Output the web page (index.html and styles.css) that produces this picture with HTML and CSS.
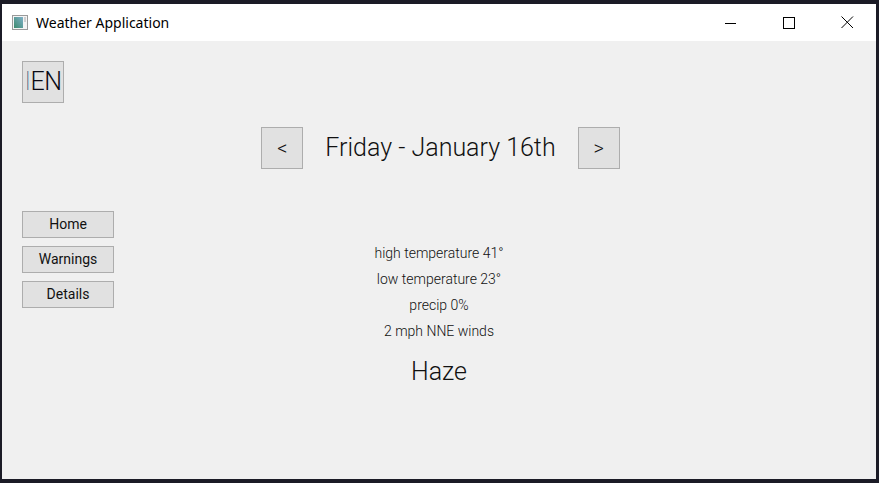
FILE: index.html
```html
<!DOCTYPE html>
<html lang="en">
<head>
<meta charset="utf-8">
<title>Weather Application</title>
<link rel="stylesheet" href="styles.css">
</head>
<body>
<div class="desktop">
  <div class="window">
    <div class="titlebar">
      <svg class="app-icon" width="16" height="15" viewBox="0 0 16 15">
        <defs>
          <linearGradient id="g" x1="0" y1="1" x2="1" y2="0">
            <stop offset="0" stop-color="#3c8a6e"/>
            <stop offset="1" stop-color="#7fb0c8"/>
          </linearGradient>
        </defs>
        <rect x="0.5" y="0.5" width="15" height="14" fill="#f4f4f4" stroke="#9a9a9a"/>
        <rect x="2" y="2" width="9" height="11" fill="url(#g)"/>
        <rect x="12" y="2" width="2" height="5" fill="#cfcfcf"/>
      </svg>
      <span class="title">Weather Application</span>
      <div class="caption-buttons">
        <div class="cap">
          <svg width="12" height="12" viewBox="0 0 12 12"><path d="M0 6.5H11" stroke="#000" stroke-width="1"/></svg>
        </div>
        <div class="cap">
          <svg width="12" height="12" viewBox="0 0 12 12"><rect x="0.5" y="0.5" width="11" height="11" fill="none" stroke="#000"/></svg>
        </div>
        <div class="cap">
          <svg width="13" height="13" viewBox="0 0 13 13"><path d="M0.5 0.5L12 12M12 0.5L0.5 12" stroke="#000" stroke-width="1"/></svg>
        </div>
      </div>
    </div>
    <div class="content">
      <div class="lang-btn"><span class="caret">I</span>EN</div>
      <div class="nav-row">
        <div class="nav-btn">&lt;</div>
        <div class="date">Friday - January 16th</div>
        <div class="nav-btn">&gt;</div>
      </div>
      <div class="main-row">
        <div class="sidebar">
          <div class="side-btn">Home</div>
          <div class="side-btn">Warnings</div>
          <div class="side-btn">Details</div>
        </div>
        <div class="info">
          <div class="line">high temperature 41°</div>
          <div class="line">low temperature 23°</div>
          <div class="line">precip 0%</div>
          <div class="line">2 mph NNE winds</div>
          <div class="cond">Haze</div>
        </div>
        <div></div>
      </div>
    </div>
  </div>
</div>
</body>
</html>
```
FILE: styles.css
```css
* { box-sizing: border-box; }
html, body {
  margin: 0;
  padding: 0;
  background: #1b1b26;
  overflow: hidden;
}
.desktop {
  position: relative;
  width: 879px;
  height: 483px;
  padding: 4px 0 0 2px;
  background: #1b1b26;
}
.window {
  position: relative;
  width: 874px;
  height: 475px;
  display: flex;
  flex-direction: column;
  font-family: Roboto, "Liberation Sans", sans-serif;
  color: #111;
}
.titlebar {
  height: 37px;
  background: #fff;
  display: flex;
  align-items: center;
  padding-left: 10px;
}
.app-icon { display: block; }
.title {
  margin-left: 8px;
  font-family: "Noto Sans", "Open Sans", sans-serif;
  font-size: 14px;
  color: #000;
}
.caption-buttons {
  margin-left: auto;
  display: flex;
  height: 100%;
}
.cap {
  width: 58px;
  height: 100%;
  display: flex;
  align-items: center;
  justify-content: center;
}
.cap svg { display: block; }
.content {
  flex: 1;
  background: #f0f0f0;
  padding: 20px 20px 0 20px;
}
.lang-btn {
  width: 42px;
  height: 42px;
  background: #e1e1e1;
  border: 1px solid #adadad;
  font-size: 25px;
  font-weight: 300;
  line-height: 40px;
  text-align: center;
  letter-spacing: -0.5px;
  color: #0a0a14;
}
.caret {
  font-weight: 100;
  color: #10306a;
}
.nav-row {
  margin-top: 24px;
  padding-left: 3px;
  display: flex;
  justify-content: center;
  align-items: center;
  gap: 22px;
}
.nav-btn {
  width: 42px;
  height: 42px;
  background: #e1e1e1;
  border: 1px solid #adadad;
  font-size: 20px;
  font-weight: 300;
  line-height: 40px;
  text-align: center;
}
.date {
  font-size: 25px;
  font-weight: 300;
  line-height: 30px;
}
.main-row {
  margin-top: 42px;
  display: grid;
  grid-template-columns: 1fr auto 1fr;
  align-items: start;
}
.sidebar {
  display: flex;
  flex-direction: column;
  gap: 8px;
}
.side-btn {
  width: 92px;
  height: 27px;
  background: #e1e1e1;
  border: 1px solid #adadad;
  font-size: 14px;
  line-height: 25px;
  text-align: center;
}
.info {
  margin-top: 29px;
  text-align: center;
}
.line {
  font-size: 14px;
  font-weight: 300;
  line-height: 26px;
}
.cond {
  margin-top: 13px;
  font-size: 25px;
  font-weight: 300;
  line-height: 30px;
}
```
